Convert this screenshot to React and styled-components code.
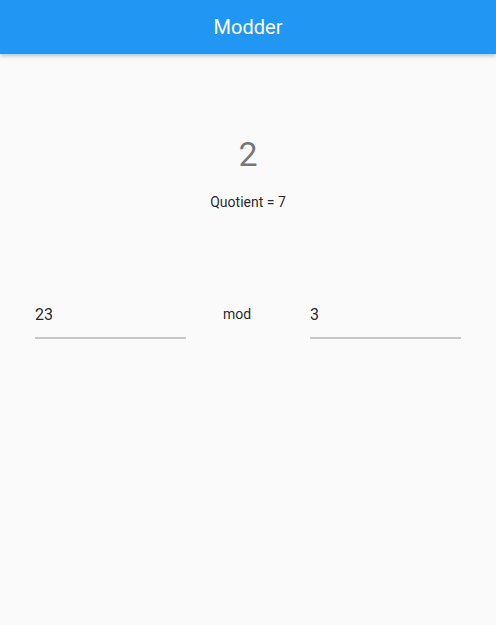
import styled, { createGlobalStyle } from 'styled-components';

const GlobalStyle = createGlobalStyle`
  html, body {
    margin: 0;
    padding: 0;
    background: #fafafa;
    font-family: Roboto, 'Liberation Sans', sans-serif;
  }
`;

const Page = styled.div`
  min-height: 625px;
  background: #fafafa;
  display: flex;
  flex-direction: column;
`;

const AppBar = styled.header`
  height: 54px;
  background: #2196f3;
  display: flex;
  align-items: center;
  justify-content: center;
  box-shadow: 0 2px 4px rgba(0, 0, 0, 0.22);
  position: relative;
  z-index: 1;
`;

const Title = styled.h1`
  margin: 0;
  color: #fff;
  font-size: 20px;
  font-weight: 400;
`;

const Result = styled.div`
  margin-top: 80px;
  text-align: center;
  font-size: 34px;
  line-height: 40px;
  color: rgba(0, 0, 0, 0.54);
`;

const Quotient = styled.div`
  margin-top: 18px;
  text-align: center;
  font-size: 14px;
  line-height: 20px;
  color: rgba(0, 0, 0, 0.87);
`;

const InputRow = styled.div`
  margin-top: 92px;
  padding: 0 35px;
  display: grid;
  grid-template-columns: 151px 1fr 151px;
  align-items: start;
`;

const Field = styled.input`
  width: 100%;
  box-sizing: border-box;
  border: none;
  border-bottom: 2px solid #c8c8c8;
  background: transparent;
  outline: none;
  padding: 1px 0 12px;
  font: 16px/20px Roboto, 'Liberation Sans', sans-serif;
  color: rgba(0, 0, 0, 0.87);
`;

const Operator = styled.span`
  padding-left: 37px;
  font-size: 14px;
  line-height: 20px;
  color: rgba(0, 0, 0, 0.87);
`;

export default function App() {
  return (
    <Page>
      <GlobalStyle />
      <AppBar>
        <Title>Modder</Title>
      </AppBar>
      <Result>2</Result>
      <Quotient>Quotient = 7</Quotient>
      <InputRow>
        <Field defaultValue="23" />
        <Operator>mod</Operator>
        <Field defaultValue="3" />
      </InputRow>
    </Page>
  );
}
